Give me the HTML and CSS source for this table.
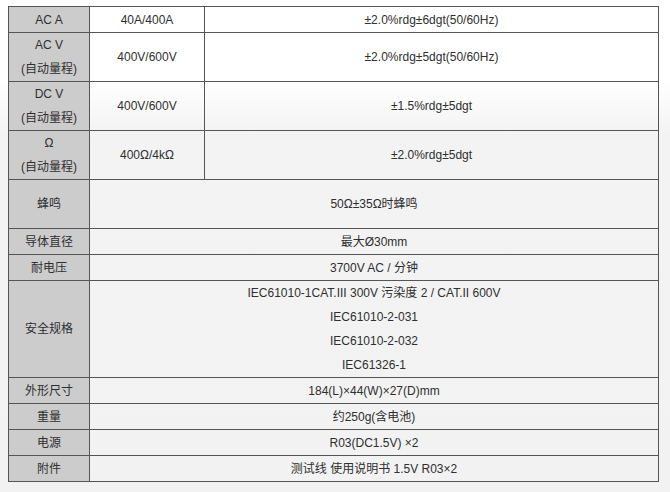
FILE: index.html
```html
<!DOCTYPE html>
<html lang="zh-CN">
<head>
<meta charset="utf-8">
<title>规格</title>
<link rel="stylesheet" href="styles.css">
</head>
<body>
<table class="spec">
  <colgroup>
    <col class="c1">
    <col class="c2">
    <col class="c3">
  </colgroup>
  <tr class="r1">
    <td class="label">AC A</td>
    <td>40A/400A</td>
    <td>±2.0%rdg±6dgt(50/60Hz)</td>
  </tr>
  <tr class="r2">
    <td class="label">AC V<br>(自动量程)</td>
    <td>400V/600V</td>
    <td>±2.0%rdg±5dgt(50/60Hz)</td>
  </tr>
  <tr class="r2">
    <td class="label">DC V<br>(自动量程)</td>
    <td>400V/600V</td>
    <td>±1.5%rdg±5dgt</td>
  </tr>
  <tr class="r2">
    <td class="label">Ω<br>(自动量程)</td>
    <td>400Ω/4kΩ</td>
    <td>±2.0%rdg±5dgt</td>
  </tr>
  <tr class="r2">
    <td class="label">蜂鸣</td>
    <td colspan="2">50Ω±35Ω时蜂鸣</td>
  </tr>
  <tr class="r1">
    <td class="label">导体直径</td>
    <td colspan="2">最大Ø30mm</td>
  </tr>
  <tr class="r1">
    <td class="label">耐电压</td>
    <td colspan="2">3700V AC / 分钟</td>
  </tr>
  <tr>
    <td class="label">安全规格</td>
    <td colspan="2">IEC61010-1CAT.III 300V 污染度 2 / CAT.II 600V<br>IEC61010-2-031<br>IEC61010-2-032<br>IEC61326-1</td>
  </tr>
  <tr class="r1">
    <td class="label">外形尺寸</td>
    <td colspan="2">184(L)×44(W)×27(D)mm</td>
  </tr>
  <tr class="r1">
    <td class="label">重量</td>
    <td colspan="2">约250g(含电池)</td>
  </tr>
  <tr class="r1">
    <td class="label">电源</td>
    <td colspan="2">R03(DC1.5V) ×2</td>
  </tr>
  <tr class="r1">
    <td class="label">附件</td>
    <td colspan="2">测试线 使用说明书 1.5V R03×2</td>
  </tr>
</table>
</body>
</html>
```

FILE: styles.css
```css
html {
  background-color: #f2f2f2;
  background-image: linear-gradient(to bottom, #ffffff 0, #ffffff 80px, #f3f3f3 135px, #f2f2f2 100%);
  background-repeat: no-repeat;
}
body {
  margin: 6px 8px;
  min-height: 480px;
  font-family: "Liberation Sans", "Noto Sans CJK SC", sans-serif;
  font-size: 12px;
  color: #2f2f2f;
}
.spec {
  border-collapse: collapse;
  width: 650px;
  table-layout: fixed;
}
.c1 { width: 81px; }
.c2 { width: 115px; }
.c3 { width: 454px; }
.spec td {
  border: 1px solid #555555;
  padding: 0;
  text-align: center;
  vertical-align: middle;
  line-height: 24px;
}
.spec .label {
  background: #cccccc;
}
.r1 td { height: 25px; }
.r2 td { height: 48px; }
```
